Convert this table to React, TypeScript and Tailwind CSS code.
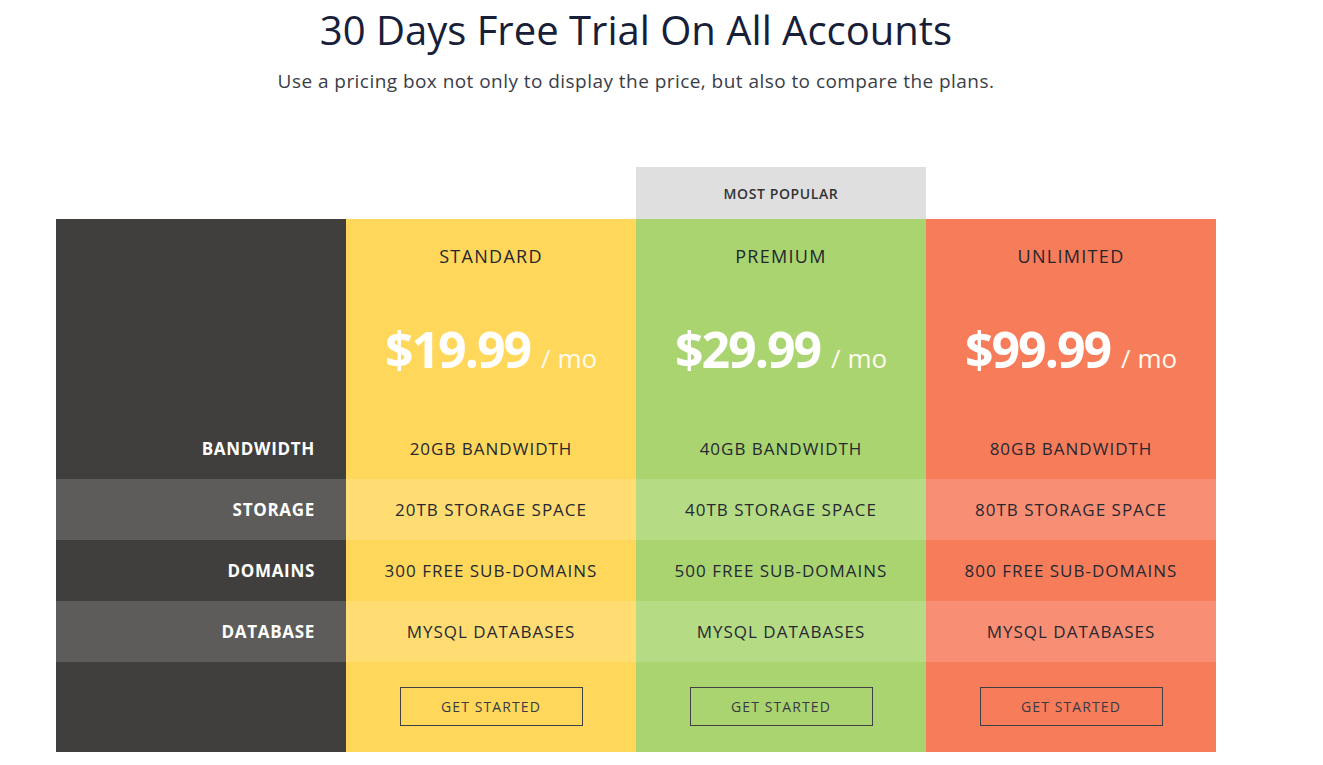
import React from "react";

const plans = [
  {
    name: "STANDARD",
    price: "$19.99",
    bg: "bg-[#ffd75a]",
    alt: "bg-[#ffdd72]",
    features: ["20GB BANDWIDTH", "20TB STORAGE SPACE", "300 FREE SUB-DOMAINS", "MYSQL DATABASES"],
  },
  {
    name: "PREMIUM",
    price: "$29.99",
    bg: "bg-[#a9d470]",
    alt: "bg-[#b5db85]",
    features: ["40GB BANDWIDTH", "40TB STORAGE SPACE", "500 FREE SUB-DOMAINS", "MYSQL DATABASES"],
  },
  {
    name: "UNLIMITED",
    price: "$99.99",
    bg: "bg-[#f77c5a]",
    alt: "bg-[#f88e73]",
    features: ["80GB BANDWIDTH", "80TB STORAGE SPACE", "800 FREE SUB-DOMAINS", "MYSQL DATABASES"],
  },
];

const labels = ["BANDWIDTH", "STORAGE", "DOMAINS", "DATABASE"];

export default function App() {
  return (
    <div
      className="min-h-[765px] bg-white"
      style={{ fontFamily: '"Open Sans", "Noto Sans", sans-serif' }}
    >
      <div className="ml-[56px] w-[1160px]">
        <h1 className="pt-[5px] text-center text-[40px] leading-[50px] text-[#172038]">
          30 Days Free Trial On All Accounts
        </h1>
        <p className="mt-[13px] text-center text-[19px] leading-[26px] tracking-[0.45px] text-[#3a3d48]">
          Use a pricing box not only to display the price, but also to compare the plans.
        </p>

        <div className="mt-[73px] grid grid-cols-4">
          <div />
          <div />
          <div className="flex h-[52px] items-center justify-center bg-[#dfdfdf] text-[14px] font-semibold tracking-[0.6px] text-[#333]">
            MOST POPULAR
          </div>
          <div />
        </div>

        <div className="grid grid-cols-4">
          <div className="flex flex-col bg-[#413f3d]">
            <div className="h-[199px]" />
            {labels.map((l, i) => (
              <div
                key={l}
                className={`flex h-[61px] items-center justify-end pr-[31px] text-[17px] font-bold tracking-[0.7px] text-white ${
                  i % 2 === 1 ? "bg-[#5d5c5a]" : ""
                }`}
              >
                {l}
              </div>
            ))}
            <div className="h-[90px]" />
          </div>
          {plans.map((p) => (
            <div key={p.name} className={`flex flex-col ${p.bg}`}>
              <div className="flex h-[199px] flex-col items-center">
                <div className="mt-[24px] text-[18px] leading-[26px] tracking-[1.3px] text-[#22262f]">{p.name}</div>
                <div className="mt-[50px] flex items-baseline gap-[11px] text-white">
                  <span className="text-[50px] font-bold leading-[60px] tracking-[-2px]">{p.price}</span>
                  <span className="text-[26px] text-[#fffbee]">/ mo</span>
                </div>
              </div>
              {p.features.map((f, i) => (
                <div
                  key={f}
                  className={`flex h-[61px] items-center justify-center text-[17px] tracking-[1px] text-[#262832] ${
                    i % 2 === 1 ? p.alt : ""
                  }`}
                >
                  {f}
                </div>
              ))}
              <div className="flex h-[90px] items-start justify-center pt-[25px]">
                <button className="h-[39px] w-[183px] border border-[#3f3f44] text-[14px] tracking-[1.1px] text-[#3a3a44]">
                  GET STARTED
                </button>
              </div>
            </div>
          ))}
        </div>
      </div>
    </div>
  );
}
